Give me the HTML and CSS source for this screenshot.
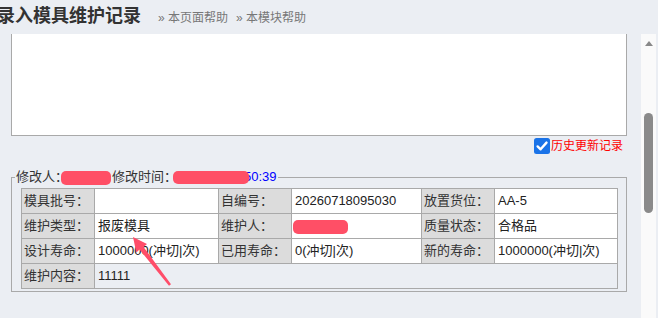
FILE: index.html
```html
<!DOCTYPE html>
<html lang="zh-CN">
<head>
<meta charset="utf-8">
<title>录入模具维护记录</title>
<link rel="stylesheet" href="styles.css">
</head>
<body>
<div class="header">
  <h1 class="title">录入模具维护记录</h1>
  <a class="help">» 本页面帮助</a>
  <a class="help">» 本模块帮助</a>
</div>
<div class="page">
  <div class="main">
    <div class="memo"></div>
    <div class="history">
      <span class="check"><svg width="16" height="16" viewBox="0 0 16 16"><rect x="0" y="0" width="16" height="16" rx="2.5" fill="#1a73e8"/><path d="M3.6 8.4 L6.6 11.3 L12.5 4.6" fill="none" stroke="#fff" stroke-width="2.4" stroke-linecap="round" stroke-linejoin="round"/></svg></span>
      <span class="history-label">历史更新记录</span>
    </div>
    <fieldset class="box">
      <legend class="legend">修改人：<span class="blob b1"></span>修改时间：<span class="time"><span class="blob b2"></span>50:39</span></legend>
      <table class="grid">
        <colgroup><col class="c1"><col class="c2"><col class="c3"><col class="c4"><col class="c5"><col class="c6"></colgroup>
        <tr><td class="lb">模具批号：</td><td class="val"></td><td class="lb">自编号：</td><td class="val">20260718095030</td><td class="lb">放置货位：</td><td class="val">AA-5</td></tr>
        <tr><td class="lb">维护类型：</td><td class="val">报废模具</td><td class="lb">维护人：</td><td class="val"><span class="blob b3"></span></td><td class="lb">质量状态：</td><td class="val">合格品</td></tr>
        <tr><td class="lb">设计寿命：</td><td class="val">1000000(冲切|次)</td><td class="lb">已用寿命：</td><td class="val">0(冲切|次)</td><td class="lb">新的寿命：</td><td class="val">1000000(冲切|次)</td></tr>
        <tr><td class="lb">维护内容：</td><td class="plain" colspan="5">11111</td></tr>
      </table>
    </fieldset>
  </div>
  <div class="scrollbar">
    <span class="up"></span>
    <span class="thumb"></span>
  </div>
</div>
<svg class="arrow" width="658" height="318" viewBox="0 0 658 318"><polygon points="133,237 147,244 143.6,247 171,284.3 169,285.7 139.6,249.6 136.3,252.5" fill="#ff4d69"/></svg>
</body>
</html>
```
FILE: styles.css
```css
html, body {
  margin: 0;
  padding: 0;
}
body {
  background: #ebeef3;
  font-family: "Liberation Sans", "Noto Sans CJK SC", sans-serif;
  font-size: 13px;
  color: #333;
  width: 658px;
  height: 318px;
  overflow: hidden;
  position: relative;
}
.header {
  height: 34px;
  display: flex;
  align-items: baseline;
  padding-top: 2px;
  box-sizing: border-box;
}
.title {
  margin: 0 0 0 -3px;
  font-family: "Noto Sans CJK SC", sans-serif;
  font-size: 18px;
  line-height: 24px;
  font-weight: bold;
  color: #333;
}
.help {
  font-size: 12px;
  color: #777;
  margin-left: 17px;
}
.help + .help {
  margin-left: 8px;
}
.page {
  display: flex;
  height: 284px;
}
.main {
  width: 641px;
  height: 284px;
  overflow: hidden;
}
.memo {
  margin-left: 11px;
  width: 614px;
  height: 101px;
  background: #fff;
  border: 1px solid #a9a9a9;
  border-top: none;
}
.history {
  display: flex;
  justify-content: flex-end;
  align-items: center;
  width: 627px;
  height: 16px;
  margin-top: 2px;
}
.check {
  display: block;
  width: 16px;
  height: 16px;
}
.check svg {
  display: block;
}
.history-label {
  color: #f00;
  font-size: 12px;
  line-height: 16px;
  margin-left: 1px;
  margin-right: 4px;
}
.box {
  margin: 14px 0 0 11px;
  width: 616px;
  box-sizing: border-box;
  border: 1px solid #a9a9a9;
  padding: 0 8px 2px 9px;
}
.legend {
  margin-left: -6px;
  padding: 0 1px;
  font-size: 13px;
  line-height: 18px;
  color: #333;
  white-space: nowrap;
}
.blob {
  display: inline-block;
  background: #ff4f66;
  border-radius: 5px;
  vertical-align: middle;
}
.b1 {
  width: 50px;
  height: 14px;
  margin-left: -7px;
  margin-right: 1px;
}
.time {
  color: #00f;
}
.b2 {
  width: 76px;
  height: 13px;
  margin-left: -4px;
  margin-right: -5px;
  position: relative;
}
.b3 {
  width: 55px;
  height: 14px;
  margin-left: -2px;
}
.grid {
  margin-top: 2px;
  border-collapse: collapse;
  table-layout: fixed;
  width: 597px;
}
.c1, .c3, .c5 { width: 73px; }
.c2 { width: 124px; }
.c4 { width: 130px; }
.c6 { width: 123px; }
.grid td {
  border: 1px solid #a9a9a9;
  height: 24px;
  padding: 0 0 0 2px;
  white-space: nowrap;
  overflow: hidden;
  line-height: 24px;
}
.lb {
  background: #dcdcdc;
  color: #333;
}
.val {
  background: #fff;
  color: #222;
}
.grid td.val, .grid td.plain {
  padding-left: 3px;
}
.plain {
  color: #222;
}
.scrollbar {
  width: 15px;
  height: 284px;
  background: #fafafa;
  position: relative;
}
.up {
  position: absolute;
  left: 4px;
  top: 7px;
  width: 0;
  height: 0;
  border-left: 4px solid transparent;
  border-right: 4px solid transparent;
  border-bottom: 5px solid #888;
}
.thumb {
  position: absolute;
  left: 3px;
  top: 79px;
  width: 9px;
  height: 100px;
  border-radius: 5px;
  background: #8a8a8a;
}
.arrow {
  position: absolute;
  left: 0;
  top: 0;
  pointer-events: none;
}
```
